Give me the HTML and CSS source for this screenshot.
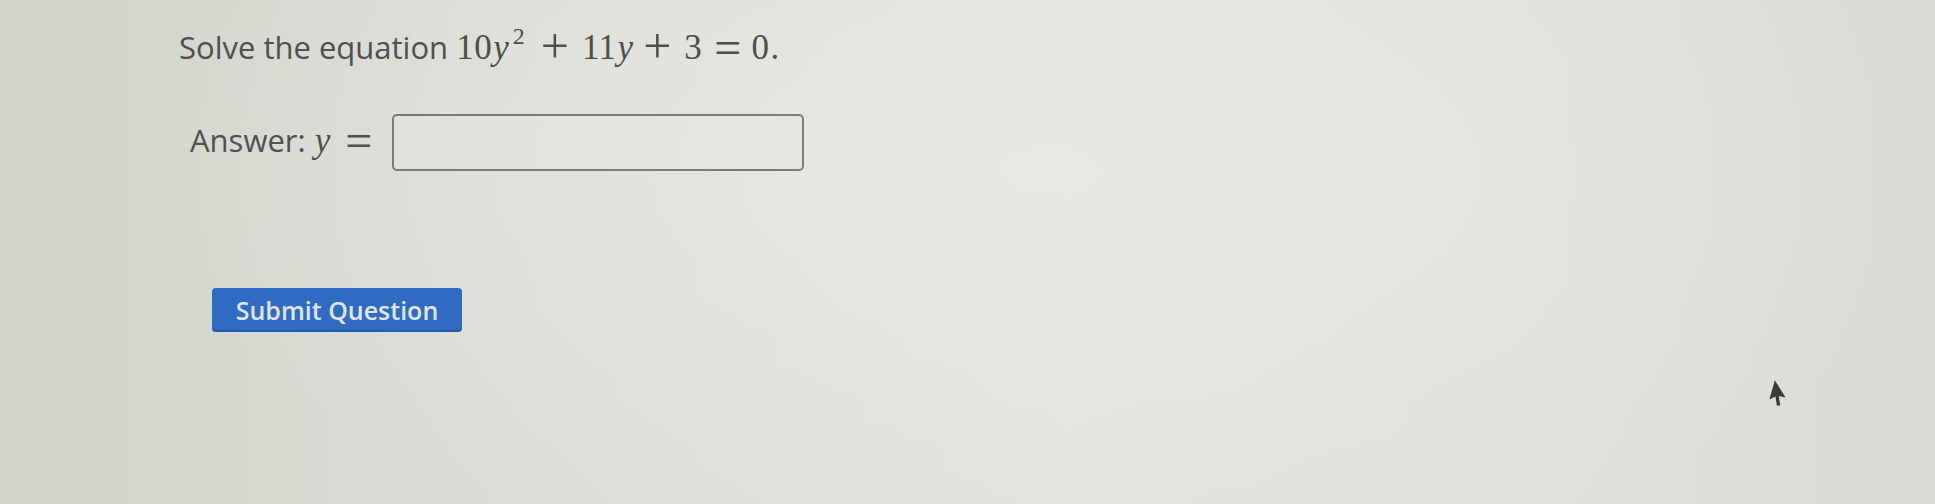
FILE: index.html
```html
<!DOCTYPE html>
<html lang="en">
<head>
<meta charset="utf-8">
<title>Solve the equation</title>
<link rel="stylesheet" href="styles.css">
</head>
<body>
<main class="page">
  <p class="question">Solve the equation <span class="math"><span class="mn">10</span><span class="mi">y</span><sup class="sup">2</sup><span class="bin">+</span><span class="mn">11</span><span class="mi">y</span><span class="bin">+</span><span class="mn">3</span><span class="rel">=</span><span class="mn">0</span></span><span class="period">.</span></p>
  <div class="answer-row">
    <span class="label">Answer: <span class="math"><span class="mi">y</span><span class="rel">=</span></span></span>
    <input class="answer-box" type="text" aria-label="Answer">
  </div>
  <button class="submit" type="button">Submit Question</button>
</main>
<svg class="cursor" width="22" height="30" viewBox="0 0 22 30" aria-hidden="true">
  <path d="M3 2 L3 22 L8 17.5 L12 26 L15 24.5 L11 16 L18 15.5 Z" fill="#3b3b3d"/>
</svg>
</body>
</html>
```

FILE: styles.css
```css
html, body {
  margin: 0;
  padding: 0;
}

body {
  width: 1935px;
  height: 504px;
  overflow: hidden;
  position: relative;
  font-family: "Open Sans", "Noto Sans", sans-serif;
  color: #505050;
  background:
    radial-gradient(ellipse 900px 420px at 1050px 170px, rgba(232, 233, 227, 0.9), rgba(232, 233, 227, 0) 100%),
    linear-gradient(90deg, #d2d3cb 0%, #dbdcd5 25%, #e2e3dd 55%, #e0e1db 80%, #d9dad4 100%);
}

.page {
  display: flex;
  flex-direction: column;
  align-items: flex-start;
}

.question {
  height: 40px;
  margin: 27px 0 0 0;
  padding-left: 179px;
  font-size: 31px;
  line-height: 40px;
  white-space: nowrap;
}

.math {
  font-family: "Liberation Serif", "Times New Roman", serif;
  font-size: 35px;
  line-height: 0;
  color: #4e4e4c;
}

.mn {
  letter-spacing: 0.5px;
}

.mi {
  font-style: italic;
  margin-left: 1px;
  margin-right: 1px;
}

.sup {
  font-size: 24px;
  line-height: 0;
  vertical-align: 15px;
  margin-left: 3px;
  margin-right: 7px;
}

.bin {
  font-size: 50px;
  line-height: 0;
  vertical-align: -4px;
  margin: 0 13px 0 9px;
}

.rel {
  font-size: 48px;
  line-height: 0;
  vertical-align: -5px;
  margin: 0 10px 0 12px;
}

.period {
  font-family: "Liberation Serif", "Times New Roman", serif;
  font-size: 35px;
  line-height: 0;
  margin-left: 1px;
}

.answer-row {
  display: flex;
  align-items: flex-start;
  margin-top: 47px;
  padding-left: 190px;
}

.label {
  display: block;
  box-sizing: border-box;
  width: 202px;
  height: 40px;
  margin-top: 6px;
  font-size: 31px;
  line-height: 40px;
  white-space: nowrap;
}

.label .rel {
  margin-left: 14px;
}

.answer-box {
  box-sizing: border-box;
  width: 412px;
  height: 57px;
  margin: 0;
  padding: 0 10px;
  border: 2px solid rgba(90, 90, 88, 0.75);
  border-radius: 5px;
  background: rgba(232, 233, 228, 0.3);
  font: 30px "Open Sans", sans-serif;
  outline: none;
}

.submit {
  box-sizing: border-box;
  width: 250px;
  height: 44px;
  margin: 117px 0 0 212px;
  padding: 0;
  border: none;
  border-radius: 4px;
  background: #2f6bc3;
  box-shadow: inset 0 -2px 0 rgba(30, 60, 120, 0.35);
  color: #dfe5ef;
  font-family: "Open Sans", "Noto Sans", sans-serif;
  font-size: 25px;
  font-weight: 600;
  line-height: 44px;
  letter-spacing: 0;
  cursor: pointer;
}

.cursor {
  position: absolute;
  left: 1768px;
  top: 380px;
  transform: rotate(16deg);
}
```
